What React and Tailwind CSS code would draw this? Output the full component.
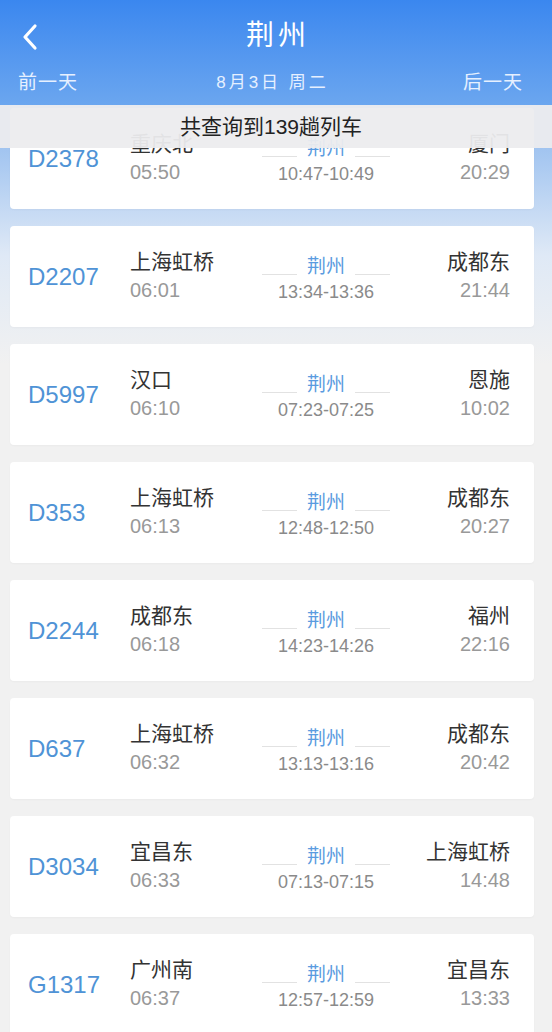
import React from 'react';

const trains = [
    { no: 'D2378', from: '重庆北', dep: '05:50', stop: '10:47-10:49', to: '厦门', arr: '20:29' },
    { no: 'D2207', from: '上海虹桥', dep: '06:01', stop: '13:34-13:36', to: '成都东', arr: '21:44' },
    { no: 'D5997', from: '汉口', dep: '06:10', stop: '07:23-07:25', to: '恩施', arr: '10:02' },
    { no: 'D353', from: '上海虹桥', dep: '06:13', stop: '12:48-12:50', to: '成都东', arr: '20:27' },
    { no: 'D2244', from: '成都东', dep: '06:18', stop: '14:23-14:26', to: '福州', arr: '22:16' },
    { no: 'D637', from: '上海虹桥', dep: '06:32', stop: '13:13-13:16', to: '成都东', arr: '20:42' },
    { no: 'D3034', from: '宜昌东', dep: '06:33', stop: '07:13-07:15', to: '上海虹桥', arr: '14:48' },
    { no: 'G1317', from: '广州南', dep: '06:37', stop: '12:57-12:59', to: '宜昌东', arr: '13:33' },
];

const font = { fontFamily: '"Liberation Sans", "Noto Sans CJK SC", sans-serif' };

const TrainCard = ({ train }) => (
    <div className="flex items-center h-[101px] ml-[10px] mr-[18px] pl-[18px] pr-[24px] bg-white rounded-[4px] shadow-[0_1px_2px_rgba(0,0,0,0.03)]">
        <div className="w-[102px] text-[24px] leading-[28px] text-[#4f93d6]">{train.no}</div>
        <div className="w-[132px] flex flex-col gap-[3px] -mt-[2px]">
            <div className="text-[21px] leading-[26px] text-[#333]">{train.from}</div>
            <div className="text-[20px] leading-[24px] text-[#999]">{train.dep}</div>
        </div>
        <div className="w-[128px] flex flex-col items-center gap-[3px] mt-[4px]">
            <div className="flex items-end h-[24px] w-full">
                <div className="flex-1 h-px bg-[#e2e2e2] mb-[4px]"></div>
                <div className="px-[10px] text-[19px] leading-[24px] text-[#5a9be0]">荆州</div>
                <div className="flex-1 h-px bg-[#e2e2e2] mb-[4px]"></div>
            </div>
            <div className="text-[18px] leading-[20px] text-[#8a8a8a]">{train.stop}</div>
        </div>
        <div className="flex-1 flex flex-col items-end gap-[3px] -mt-[2px]">
            <div className="text-[21px] leading-[26px] text-[#333] whitespace-nowrap">{train.to}</div>
            <div className="text-[20px] leading-[24px] text-[#999]">{train.arr}</div>
        </div>
    </div>
);

const App = () => {
    return (
        <div className="relative w-[552px] h-[1032px] overflow-hidden bg-[#f1f1f1]" style={font}>
            {/* header */}
            <div className="h-[105px] pt-[3px] bg-gradient-to-b from-[#3a87ef] to-[#6ba6ef] text-white">
                <div className="relative flex items-center justify-center h-[65px]">
                    <svg className="absolute left-[20px] top-[20px]" width="20" height="28" viewBox="0 0 20 28">
                        <polyline points="15,3 5,14 15,25" fill="none" stroke="white" strokeWidth="3.2" strokeLinecap="round" strokeLinejoin="round" />
                    </svg>
                    <span className="text-[28px] tracking-[4px] pl-[4px]">荆州</span>
                </div>
                <div className="flex items-center justify-between h-[30px] pl-[18px] pr-[29px] text-[#e6f0ff]">
                    <span className="text-[19px] tracking-[1px]">前一天</span>
                    <span className="text-[17px] tracking-[3px] -mr-[4px]">8月3日 周二</span>
                    <span className="text-[19px] tracking-[1px]">后一天</span>
                </div>
            </div>

            {/* list */}
            <div className="flex flex-col gap-[17px] pt-[3px] bg-[linear-gradient(to_bottom,#9fc3f0_40px,#dfe9f6_150px,#f1f1f1_260px)]">
                {trains.map(t => (
                    <TrainCard key={t.no} train={t} />
                ))}
            </div>

            {/* result count banner */}
            <div className="absolute left-0 right-0 top-[105px] h-[43px] flex items-center justify-center bg-[rgba(236,236,238,0.95)]">
                <span className="text-[21px] text-[#222] -ml-[10px]">共查询到139趟列车</span>
            </div>
        </div>
    );
};

export default App;
